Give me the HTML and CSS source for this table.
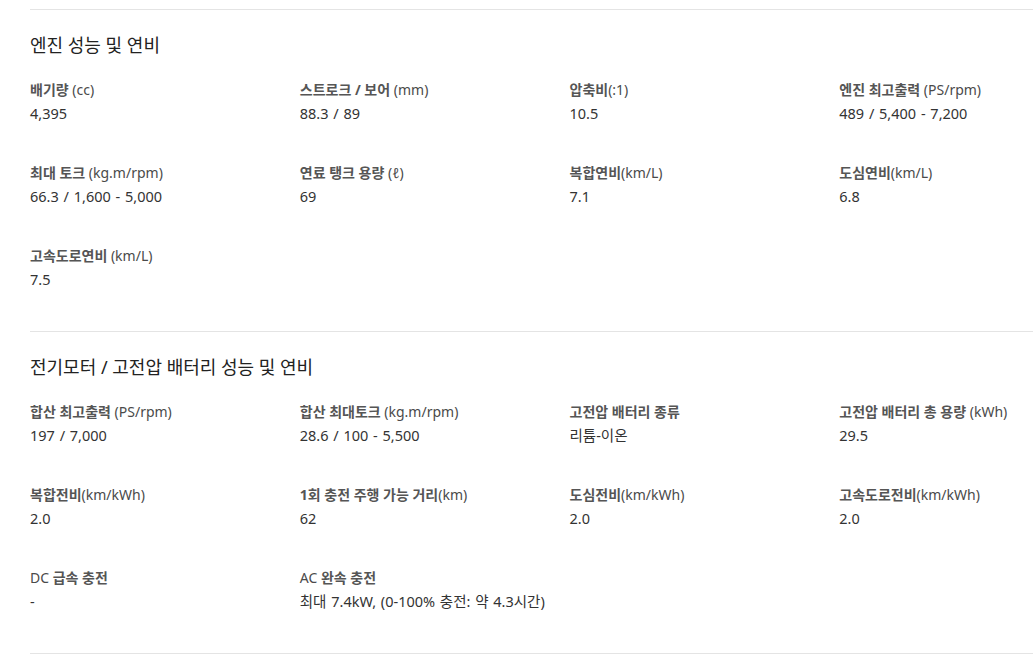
FILE: index.html
```html
<!DOCTYPE html>
<html lang="ko">
<head>
<meta charset="utf-8">
<title>제원</title>
<link rel="stylesheet" href="styles.css">
</head>
<body>
<div class="specs">
  <section class="spec-section">
    <h3 class="spec-title">엔진 성능 및 연비</h3>
    <dl class="spec-grid">
      <div class="spec-item"><dt class="spec-label">배기량 <span class="unit">(cc)</span></dt><dd class="spec-value">4,395</dd></div>
      <div class="spec-item"><dt class="spec-label">스트로크 / 보어 <span class="unit">(mm)</span></dt><dd class="spec-value">88.3 / 89</dd></div>
      <div class="spec-item"><dt class="spec-label">압축비<span class="unit">(:1)</span></dt><dd class="spec-value">10.5</dd></div>
      <div class="spec-item"><dt class="spec-label">엔진 최고출력 <span class="unit">(PS/rpm)</span></dt><dd class="spec-value">489 / 5,400 - 7,200</dd></div>
      <div class="spec-item"><dt class="spec-label">최대 토크 <span class="unit">(kg.m/rpm)</span></dt><dd class="spec-value">66.3 / 1,600 - 5,000</dd></div>
      <div class="spec-item"><dt class="spec-label">연료 탱크 용량 <span class="unit">(ℓ)</span></dt><dd class="spec-value">69</dd></div>
      <div class="spec-item"><dt class="spec-label">복합연비<span class="unit">(km/L)</span></dt><dd class="spec-value">7.1</dd></div>
      <div class="spec-item"><dt class="spec-label">도심연비<span class="unit">(km/L)</span></dt><dd class="spec-value">6.8</dd></div>
      <div class="spec-item"><dt class="spec-label">고속도로연비 <span class="unit">(km/L)</span></dt><dd class="spec-value">7.5</dd></div>
    </dl>
  </section>
  <section class="spec-section">
    <h3 class="spec-title">전기모터 / 고전압 배터리 성능 및 연비</h3>
    <dl class="spec-grid">
      <div class="spec-item"><dt class="spec-label">합산 최고출력 <span class="unit">(PS/rpm)</span></dt><dd class="spec-value">197 / 7,000</dd></div>
      <div class="spec-item"><dt class="spec-label">합산 최대토크 <span class="unit">(kg.m/rpm)</span></dt><dd class="spec-value">28.6 / 100 - 5,500</dd></div>
      <div class="spec-item"><dt class="spec-label">고전압 배터리 종류</dt><dd class="spec-value">리튬-이온</dd></div>
      <div class="spec-item"><dt class="spec-label">고전압 배터리 총 용량 <span class="unit">(kWh)</span></dt><dd class="spec-value">29.5</dd></div>
      <div class="spec-item"><dt class="spec-label">복합전비<span class="unit">(km/kWh)</span></dt><dd class="spec-value">2.0</dd></div>
      <div class="spec-item"><dt class="spec-label">1회 충전 주행 가능 거리<span class="unit">(km)</span></dt><dd class="spec-value">62</dd></div>
      <div class="spec-item"><dt class="spec-label">도심전비<span class="unit">(km/kWh)</span></dt><dd class="spec-value">2.0</dd></div>
      <div class="spec-item"><dt class="spec-label">고속도로전비<span class="unit">(km/kWh)</span></dt><dd class="spec-value">2.0</dd></div>
      <div class="spec-item"><dt class="spec-label"><span class="unit">DC</span> 급속 충전</dt><dd class="spec-value">-</dd></div>
      <div class="spec-item"><dt class="spec-label"><span class="unit">AC</span> 완속 충전</dt><dd class="spec-value">최대 7.4kW, (0-100% 충전: 약 4.3시간)</dd></div>
    </dl>
  </section>
  <section class="spec-section spec-section-end"></section>
</div>
</body>
</html>
```
FILE: styles.css
```css
html, body {
  margin: 0;
  padding: 0;
  background: #fff;
}

body {
  font-family: "Noto Sans", "Noto Sans CJK KR", sans-serif;
  color: #333;
}

.specs {
  padding-top: 9px;
  margin-left: 30px;
}

.spec-section {
  border-top: 1px solid #e4e4e4;
  padding: 22px 0 40px;
}

.spec-section-end {
  padding: 0;
}

.spec-title {
  margin: 0 0 21px;
  font-size: 18px;
  line-height: 26px;
  font-weight: 400;
  color: #222;
}

.spec-grid {
  margin: 0;
  display: grid;
  grid-template-columns: repeat(3, 269.75px) 1fr;
  row-gap: 37px;
}

.spec-item {
  min-width: 0;
}

.spec-label {
  font-size: 14px;
  line-height: 22px;
  font-weight: 700;
  color: #555;
  white-space: nowrap;
}

.unit {
  font-weight: 400;
  color: #4a4a4a;
}

.spec-value {
  margin: 0;
  font-size: 14.5px;
  line-height: 24px;
  color: #333;
  white-space: nowrap;
  word-spacing: 1px;
}
```
